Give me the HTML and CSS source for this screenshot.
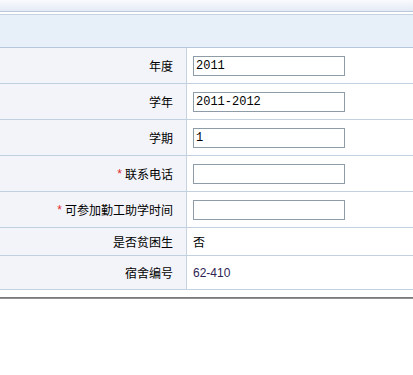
FILE: index.html
```html
<!DOCTYPE html>
<html lang="zh-CN">
<head>
<meta charset="utf-8">
<title>勤工助学申请</title>
<link rel="stylesheet" href="styles.css">
</head>
<body>
<div class="topbar"></div>
<div class="caption"></div>
<div class="form">
  <div class="row tall">
    <div class="label">年度</div>
    <div class="value"><input class="field" type="text" value="2011"></div>
  </div>
  <div class="row tall">
    <div class="label">学年</div>
    <div class="value"><input class="field" type="text" value="2011-2012"></div>
  </div>
  <div class="row tall">
    <div class="label">学期</div>
    <div class="value"><input class="field" type="text" value="1"></div>
  </div>
  <div class="row tall">
    <div class="label"><span class="req">*</span> 联系电话</div>
    <div class="value"><input class="field" type="text" value=""></div>
  </div>
  <div class="row tall">
    <div class="label"><span class="req">*</span> 可参加勤工助学时间</div>
    <div class="value"><input class="field" type="text" value=""></div>
  </div>
  <div class="row short">
    <div class="label">是否贫困生</div>
    <div class="value">否</div>
  </div>
  <div class="row mid">
    <div class="label">宿舍编号</div>
    <div class="value num">62-410</div>
  </div>
</div>
<div class="footline"></div>
</body>
</html>
```

FILE: styles.css
```css
html, body {
  margin: 0;
  padding: 0;
  background: #ffffff;
}
body {
  font-family: "Noto Sans CJK SC", "Liberation Sans", sans-serif;
  font-size: 12px;
  color: #000;
}
.topbar {
  height: 11px;
  background: linear-gradient(to bottom, #f9fafd, #e4ebf6);
  border-bottom: 1px solid #b9c8da;
}
.caption {
  margin-top: 2px;
  height: 32px;
  background: #e7eff9;
  border-top: 1px solid #c4d2e2;
  border-bottom: 1px solid #b6c7d9;
}
.row {
  display: grid;
  grid-template-columns: 187px 1fr;
  border-bottom: 1px solid #c2d1e0;
}
.row.tall { height: 35px; }
.row.short { height: 27px; }
.row.mid { height: 33px; }
.label {
  background: #f3f4f9;
  border-right: 1px solid #c8d4e2;
  display: flex;
  align-items: center;
  justify-content: flex-end;
  padding-right: 13px;
  line-height: 14px;
  white-space: nowrap;
}
.req {
  color: #e02a2a;
  font-family: "Liberation Sans", sans-serif;
  margin-right: 3px;
}
.value {
  display: flex;
  align-items: center;
  padding-left: 6px;
  line-height: 14px;
}
.field {
  box-sizing: border-box;
  width: 152px;
  height: 20px;
  margin: 0;
  padding: 0 2px;
  border: 1px solid #8d9ca6;
  background: #fff;
  font-family: "Liberation Mono", monospace;
  font-size: 12px;
  color: #000;
  outline: none;
}
.num {
  font-family: "Liberation Sans", sans-serif;
  color: #2e2452;
}
.footline {
  margin-top: 7px;
  height: 2px;
  background: linear-gradient(to bottom, #6f6f6f, #9a9a9a);
}
```
